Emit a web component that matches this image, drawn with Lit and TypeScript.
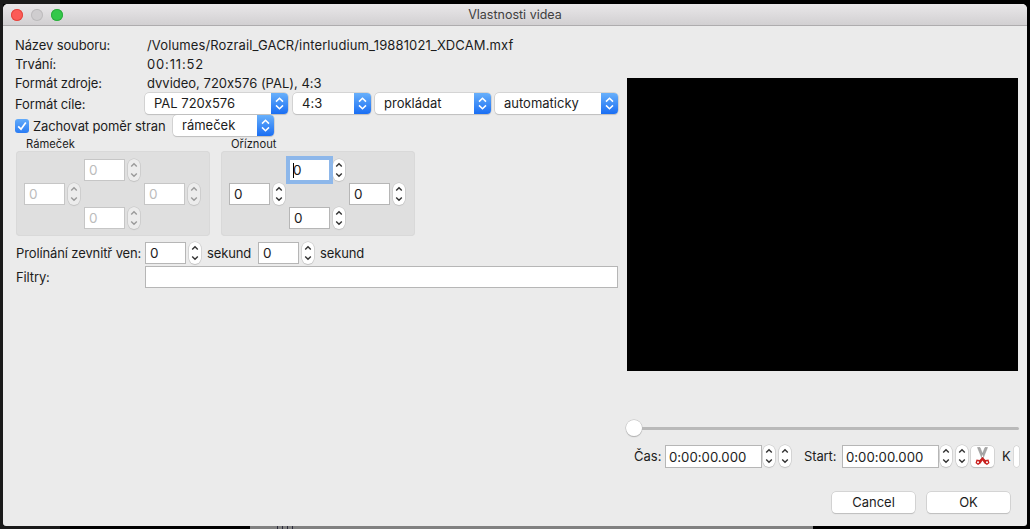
import { LitElement, html, css, svg } from "lit";
import { customElement } from "lit/decorators.js";

const chevrons = svg`<path d="M3.2 7.6 6 4.8 8.8 7.6M3.2 14.4 6 17.2 8.8 14.4" fill="none" stroke="currentColor" stroke-width="1.4"/>`;
const arrows = svg`<path d="M5 8.6 8.5 5.2 12 8.6M5 12.4 8.5 15.8 12 12.4" fill="none" stroke="currentColor" stroke-width="1.5"/>`;

@customElement("app-root")
export class AppRoot extends LitElement {
  static styles = css`
    :host {
      display: block;
      width: 1030px;
      height: 529px;
      box-sizing: border-box;
      padding: 4px 3px 3px 3px;
      overflow: hidden;
      background:
        linear-gradient(#1a1a1a, #1a1a1a) 0 0 / 3px 100% no-repeat,
        linear-gradient(#1a1a1a, #1a1a1a) 0 0 / 60px 4px no-repeat,
        linear-gradient(#1a1a1a, #1a1a1a) 0 100% / 60px 3px no-repeat,
        repeating-linear-gradient(90deg, #2a2a3a 0 1px, #808080 1px 5px) 277px 100% / 19px 3px no-repeat,
        linear-gradient(#808080, #808080) 250px 100% / 563px 3px no-repeat,
        #000;
      font: 13px/16px "Inter", "Liberation Sans", sans-serif;
      font-feature-settings: "calt" 0;
      color: #1c1c1c;
    }
    .window {
      height: 522px;
      background: #ebebeb;
      border-radius: 5px 5px 3px 3px;
      display: flex;
      flex-direction: column;
      overflow: hidden;
    }
    .titlebar {
      height: 21px;
      flex: none;
      display: flex;
      align-items: center;
      position: relative;
      padding-left: 8px;
      gap: 8px;
      background: linear-gradient(#e9e7e9, #d2d0d2);
      border-bottom: 1px solid #aeacae;
    }
    .light { width: 12px; height: 12px; border-radius: 50%; }
    .red { background: #fc5b57; box-shadow: inset 0 0 0 1px #e2463f; }
    .gray { background: #cfcdcf; box-shadow: inset 0 0 0 1px #bdbbbd; }
    .green { background: #34c84a; box-shadow: inset 0 0 0 1px #2dac3e; }
    .title {
      position: absolute;
      left: 0;
      right: 0;
      top: 3px;
      text-align: center;
      color: #404040;
      font-size: 12.5px;
    }
    .content {
      flex: 1;
      display: flex;
      gap: 9px;
      padding-left: 12px;
      min-height: 0;
    }
    .left {
      width: 603px;
      flex: none;
      padding-top: 9px;
      display: flex;
      flex-direction: column;
    }
    .info { height: 19px; display: flex; align-items: center; }
    .lab { width: 132px; flex: none; letter-spacing: -0.12px; }
    .path { letter-spacing: 0.12px; }
    .dur { letter-spacing: 0.85px; }
    .row { display: flex; align-items: center; }
    .targets { height: 21px; gap: 4px; margin-top: 1px; }
    .targets .lab { width: 126px; }
    .after-first { margin-left: 1px; }
    .select {
      height: 21px;
      box-sizing: border-box;
      background: #fff;
      border-radius: 4px;
      box-shadow: 0 0 0 0.5px #bdbdbd, 0 1px 1px #c4c4c4;
      display: flex;
      justify-content: space-between;
      overflow: hidden;
      padding-left: 9px;
      line-height: 21px;
      flex: none;
    }
    .select .arrow {
      width: 17px;
      flex: none;
      background: linear-gradient(#68b0fb, #1a6ef3);
      color: #fff;
    }
    .select svg { display: block; width: 17px; height: 21px; }
    .aspect { height: 21px; margin-top: 1px; gap: 4px; }
    .check {
      width: 14px;
      height: 14px;
      border-radius: 3px;
      background: linear-gradient(#62abfa, #2a7cf4);
      flex: none;
    }
    .check svg { display: block; }
    .aspect .text { width: 136px; flex: none; letter-spacing: -0.12px; }
    .groups { display: flex; gap: 11px; margin-top: 1px; padding-left: 1px; }
    .group { width: 194px; }
    .group-title { font-size: 11.2px; line-height: 14px; padding-left: 10px; }
    .box {
      height: 85px;
      box-sizing: border-box;
      background: #dfdfdf;
      border-radius: 4px;
      box-shadow: inset 0 0 0 1px #d9d9d9;
      padding: 8px 0 0 8px;
      display: grid;
      grid-template-columns: repeat(3, 60px);
      grid-auto-rows: 22px;
      row-gap: 2px;
    }
    .spin { display: flex; align-items: center; gap: 3px; }
    .field {
      box-sizing: border-box;
      background: #fff;
      border: 1px solid #b6b6b6;
      height: 22px;
      line-height: 21px;
      padding-left: 4px;
      font-size: 13.5px;
      color: #1c1c1c;
      position: relative;
      flex: none;
    }
    .n { width: 41px; }
    .off .field { color: #bcbcbc; border-color: #c6c6c6; }
    .off .step { color: #9a9a9a; background: #ececec; }
    .focus {
      box-shadow: 0 0 0 3px #8db7ea;
      border-color: #8db7ea;
      padding-left: 3px;
    }
    .focus::after {
      content: "";
      position: absolute;
      left: 3px;
      top: 3px;
      width: 1px;
      height: 15px;
      background: #000;
    }
    .step {
      width: 12px;
      height: 22px;
      flex: none;
      background: #fff;
      border-radius: 6px;
      box-shadow: 0 0 0 0.5px #c0c0c0, 0 1px 1px #c8c8c8;
      color: #333;
    }
    .step svg { display: block; width: 12px; height: 22px; }
    .fade { height: 22px; margin-top: 6px; padding-left: 1px; }
    .fade .lab { width: 129px; }
    .fade .word { width: 51px; margin-left: 6px; letter-spacing: -0.12px; flex: none; }
    .filters { height: 22px; margin-top: 2px; padding-left: 1px; }
    .filters .lab { width: 129px; }
    .filters .field { flex: 1; height: 22px; }
    .right {
      width: 391px;
      flex: none;
      padding-top: 52px;
      display: flex;
      flex-direction: column;
    }
    .video { height: 293px; background: #000; flex: none; }
    .slider {
      margin-top: 49px;
      height: 16px;
      width: 392px;
      position: relative;
      display: flex;
      align-items: center;
    }
    .track { flex: 1; height: 3px; border-radius: 2px; background: #b9b9b9; }
    .thumb {
      position: absolute;
      left: -1px;
      top: 0;
      width: 16px;
      height: 16px;
      border-radius: 50%;
      background: #fff;
      box-shadow: 0 0 0 0.5px #bbb, 0 1px 1px #aaa;
    }
    .time { height: 24px; margin-top: 8px; margin-left: 7px; width: 400px; }
    .time .field { width: 97px; height: 23px; font-size: 13.2px; padding-left: 3px; line-height: 22px; }
    .time .l1 { width: 31px; }
    .time .l2 { width: 38px; margin-left: 13px; letter-spacing: -0.12px; }
    .time .step { margin-left: 1px; }
    .time .step + .step { margin-left: 4px; }
    .cut {
      width: 23px;
      height: 21px;
      margin-left: 3px;
      background: #fff;
      border-radius: 4px;
      box-shadow: 0 0 0 0.5px #c0c0c0, 0 1px 1px #bbb;
      flex: none;
    }
    .cut svg { display: block; }
    .k { margin-left: 8px; width: 12px; }
    .slice {
      width: 5px;
      height: 21px;
      background: #fff;
      border-radius: 3px;
      box-shadow: 0 0 0 0.5px #c8c8c8;
      flex: none;
    }
    .actions { display: flex; gap: 12px; margin-top: 24px; margin-left: 205px; }
    .btn {
      width: 83px;
      height: 21px;
      line-height: 21px;
      text-align: center;
      background: #fff;
      border-radius: 4px;
      box-shadow: 0 0 0 0.5px #bdbdbd, 0 1px 1px #c0c0c0;
    }
  `;

  private stepper() {
    return html`<div class="step"><svg viewBox="0 0 12 22">${chevrons}</svg></div>`;
  }

  private select(label: string, width: number, cls = "") {
    return html`<div class="select ${cls}" style="width:${width}px">
      <span>${label}</span>
      <div class="arrow"><svg viewBox="0 0 17 21">${arrows}</svg></div>
    </div>`;
  }

  private spin(cls = "") {
    return html`<div class="spin"><div class="field n ${cls}">0</div>${this.stepper()}</div>`;
  }

  private cross(focusTop = false) {
    return html`
      <div></div>${this.spin(focusTop ? "focus" : "")}<div></div>
      ${this.spin()}<div></div>${this.spin()}
      <div></div>${this.spin()}<div></div>
    `;
  }

  render() {
    return html`
      <div class="window">
        <div class="titlebar">
          <div class="light red"></div>
          <div class="light gray"></div>
          <div class="light green"></div>
          <div class="title">Vlastnosti videa</div>
        </div>
        <div class="content">
          <div class="left">
            <div class="info"><span class="lab">Název souboru:</span><span class="path">/Volumes/Rozrail_GACR/interludium_19881021_XDCAM.mxf</span></div>
            <div class="info"><span class="lab">Trvání:</span><span class="dur">00:11:52</span></div>
            <div class="info"><span class="lab">Formát zdroje:</span><span>dvvideo, 720x576 (PAL), 4:3</span></div>
            <div class="row targets">
              <span class="lab">Formát cíle:</span>
              ${this.select("PAL 720x576", 143)}
              ${this.select("4:3", 78, "after-first")}
              ${this.select("prokládat", 116)}
              ${this.select("automaticky", 123)}
            </div>
            <div class="row aspect">
              <div class="check">
                <svg width="14" height="14" viewBox="0 0 14 14"><path d="M3.2 7.4 6 10.2 10.8 3.6" fill="none" stroke="#fff" stroke-width="1.7"/></svg>
              </div>
              <span class="text">Zachovat poměr stran</span>
              ${this.select("rámeček", 101)}
            </div>
            <div class="groups">
              <div class="group off">
                <div class="group-title">Rámeček</div>
                <div class="box">${this.cross()}</div>
              </div>
              <div class="group">
                <div class="group-title">Oříznout</div>
                <div class="box">${this.cross(true)}</div>
              </div>
            </div>
            <div class="row fade">
              <span class="lab">Prolínání zevnitř ven:</span>
              ${this.spin()}<span class="word">sekund</span>
              ${this.spin()}<span class="word">sekund</span>
            </div>
            <div class="row filters">
              <span class="lab">Filtry:</span>
              <div class="field"></div>
            </div>
          </div>
          <div class="right">
            <div class="video"></div>
            <div class="slider"><div class="track"></div><div class="thumb"></div></div>
            <div class="row time">
              <span class="l1">Čas:</span>
              <div class="field">0:00:00.000</div>
              ${this.stepper()}${this.stepper()}
              <span class="l2">Start:</span>
              <div class="field">0:00:00.000</div>
              ${this.stepper()}${this.stepper()}
              <div class="cut">
                <svg width="23" height="21" viewBox="0 0 23 21">
                  <path d="M6.5 1.5 9 1.5 12.6 10.5 11 12.5ZM16.5 1.5 14 1.5 10.4 10.5 12 12.5Z" fill="#a8a8a8" stroke="#8c8c8c" stroke-width=".5"/>
                  <path d="M11.5 11 8.5 14 5.5 13.5 4.5 17 7 19 9.5 17.5 11.5 14.5 13.5 17.5 16 19 18.5 17 17.5 13.5 14.5 14Z" fill="#c9211f"/>
                  <circle cx="7" cy="16.2" r="1" fill="#fff"/>
                  <circle cx="16" cy="16.2" r="1" fill="#fff"/>
                </svg>
              </div>
              <span class="k">K</span>
              <div class="slice"></div>
            </div>
            <div class="actions">
              <div class="btn">Cancel</div>
              <div class="btn">OK</div>
            </div>
          </div>
        </div>
      </div>
    `;
  }
}
